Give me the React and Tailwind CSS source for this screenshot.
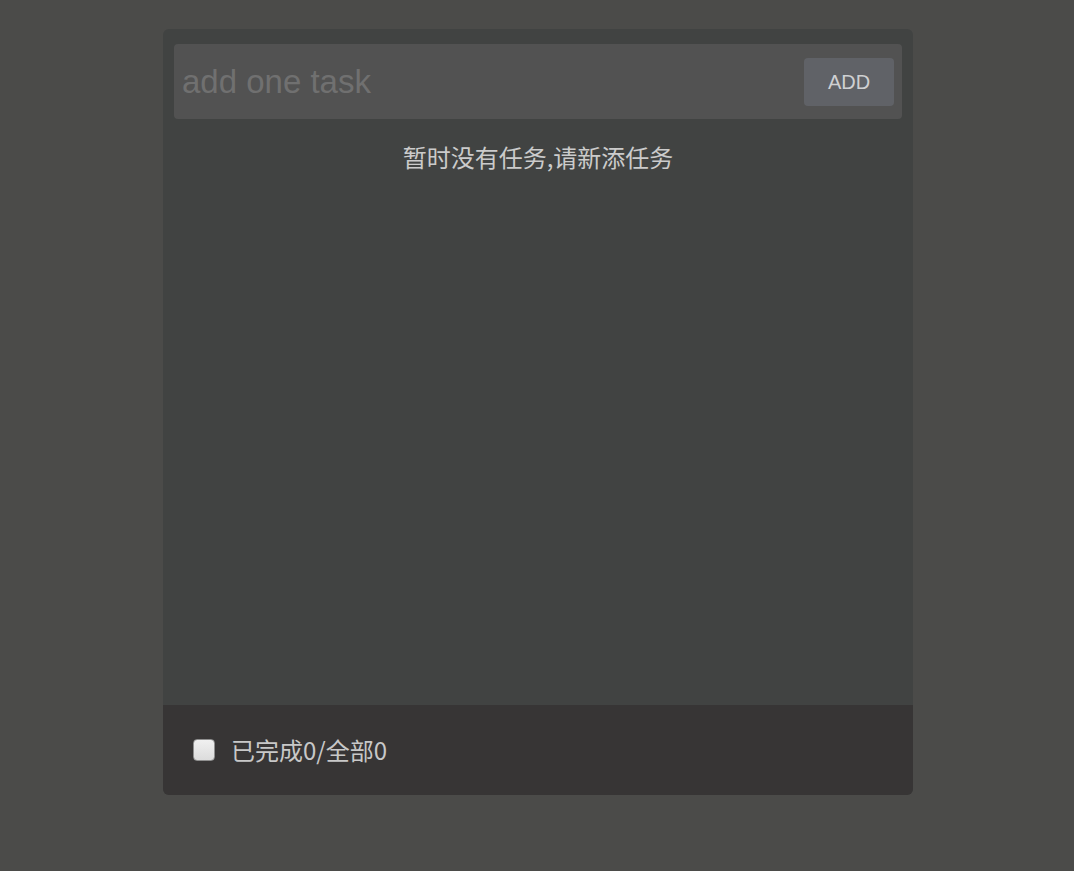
import React, { useState } from 'react';

export default function App() {
  const [tasks, setTasks] = useState([]);
  const [text, setText] = useState('');

  const done = tasks.filter((t) => t.done).length;

  const addTask = () => {
    if (!text.trim()) return;
    setTasks([...tasks, { id: Date.now(), title: text.trim(), done: false }]);
    setText('');
  };

  return (
    <div className="min-h-[871px] bg-[#4b4b49] pt-[29px] pl-[2px] font-['Liberation_Sans','Noto_Sans_CJK_SC',sans-serif]">
      <div className="mx-auto w-[750px] h-[766px] rounded-[6px] bg-[#414342] flex flex-col overflow-hidden">
        <div className="flex-1 px-[11px] pt-[15px]">
          <div className="h-[75px] rounded-[4px] bg-[#525252] flex items-center pl-[8px] pr-[8px]">
            <input
              value={text}
              onChange={(e) => setText(e.target.value)}
              placeholder="add one task"
              className="flex-1 min-w-0 bg-transparent outline-none text-[33px] text-[#c8c8c8] placeholder:text-[#707070]"
            />
            <button
              onClick={addTask}
              className="w-[90px] h-[48px] rounded-[4px] bg-[#606267] text-[#cfd0d2] text-[20px] ml-2"
            >
              ADD
            </button>
          </div>
          {tasks.length === 0 ? (
            <p className="mt-[22px] text-center text-[24px] leading-[32px] text-[#cbcbcb] font-['Noto_Sans_CJK_SC',sans-serif]">
              暂时没有任务,请新添任务
            </p>
          ) : (
            <ul className="mt-4 space-y-2 text-[20px] text-[#cbcbcb]">
              {tasks.map((t) => (
                <li key={t.id}>{t.title}</li>
              ))}
            </ul>
          )}
        </div>
        <div className="h-[90px] bg-[#373535] flex items-center pl-[30px] gap-[16px]">
          <span className="w-[22px] h-[22px] rounded-[4px] border border-[#8f8f8f] bg-gradient-to-b from-[#f0f0f0] to-[#dcdcdc] shrink-0" />
          <span className="text-[24px] text-[#c8c8c8] font-['Noto_Sans_CJK_SC',sans-serif]">
            已完成{done}/全部{tasks.length}
          </span>
        </div>
      </div>
    </div>
  );
}
